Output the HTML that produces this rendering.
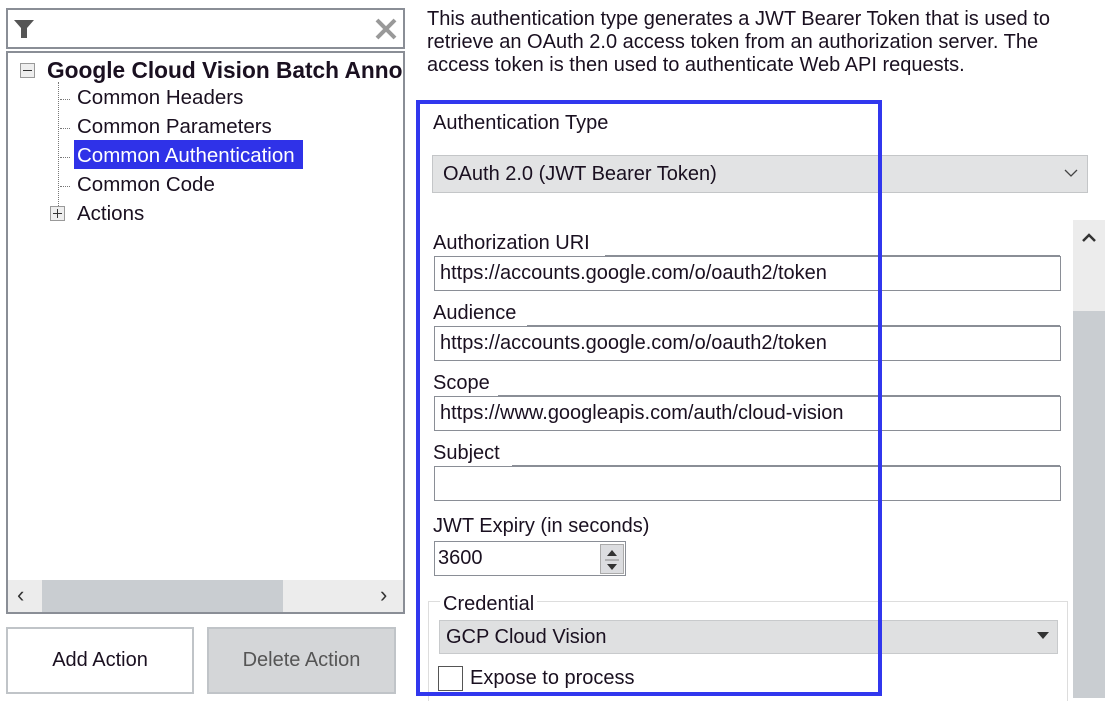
<!DOCTYPE html>
<html><head><style>
*{box-sizing:border-box;margin:0;padding:0}
body{width:1109px;height:698px;background:#fff;position:relative;overflow:hidden;font-family:"Liberation Sans",sans-serif;color:#1a1020;font-size:20.5px}
.a{position:absolute}
.box{position:absolute;border:1px solid #8a8e96;background:#fff}
.lbl{position:absolute;font-size:20px;white-space:nowrap}
.ln{position:absolute;height:1px;background:#8a8e96}
.tb{position:absolute;border:1px solid #8a8e96;background:#fff;font-size:20px;padding-left:5px;line-height:32px;white-space:nowrap}
.tree{position:absolute;font-size:20.5px;white-space:nowrap}
.dot{position:absolute;border-top:1px dotted #777;width:10px}
</style></head><body>
<div class="box" style="left:6px;top:8px;width:399px;height:41px;border-width:2px"></div>
<svg class="a" style="left:13px;top:18px" width="22" height="22" viewBox="0 0 22 22"><path d="M1 2h20l-7 8v10h-6v-10z" fill="#555"/></svg>
<svg class="a" style="left:374px;top:17px" width="24" height="24" viewBox="0 0 24 24"><path d="M3 3L21 21M21 3L3 21" stroke="#999" stroke-width="4"/></svg>
<div class="box" style="left:6px;top:51px;width:399px;height:563px;border-width:2px"></div>
<div class="a" style="left:20px;top:63px;width:15px;height:15px;border:1px solid #999;background:#eee"></div>
<div class="a" style="left:23px;top:70px;width:9px;height:1px;background:#333"></div>
<div class="a" style="left:58px;top:82px;height:130px;border-left:1px dotted #777"></div>
<div class="tree" style="left:47px;top:57px;font-weight:bold;font-size:22.7px">Google Cloud Vision Batch Anno</div>
<div class="dot" style="left:60px;top:99px"></div><div class="tree" style="left:77px;top:86px">Common Headers</div>
<div class="dot" style="left:60px;top:128px"></div><div class="tree" style="left:77px;top:115px">Common Parameters</div>
<div class="dot" style="left:60px;top:157px"></div><div class="a" style="left:74px;top:140px;width:229px;height:29px;background:#2f32e8"></div><div class="tree" style="left:77px;top:144px;color:#fff">Common Authentication</div>
<div class="dot" style="left:60px;top:186px"></div><div class="tree" style="left:77px;top:173px">Common Code</div>
<div class="a" style="left:50px;top:206px;width:15px;height:15px;border:1px solid #999;background:#eee"></div>
<div class="a" style="left:53px;top:213px;width:9px;height:1px;background:#333"></div><div class="a" style="left:57px;top:209px;width:1px;height:9px;background:#333"></div>
<div class="tree" style="left:77px;top:202px">Actions</div>
<div class="a" style="left:8px;top:580px;width:395px;height:32px;background:#ececec"></div>
<div class="a" style="left:42px;top:580px;width:241px;height:32px;background:#c9cdd1"></div>
<div class="a" style="left:17px;top:582px;font-size:22px;color:#333">&lsaquo;</div>
<div class="a" style="left:380px;top:582px;font-size:22px;color:#333">&rsaquo;</div>
<div class="a" style="left:6px;top:627px;width:188px;height:67px;border:2px solid #c0c4c8;background:#fff;text-align:center;line-height:63px;font-size:20px">Add Action</div>
<div class="a" style="left:207px;top:627px;width:189px;height:67px;border:2px solid #c0c4c8;background:#d4d6d8;text-align:center;line-height:63px;font-size:20px;color:#555">Delete Action</div>
<div class="a" style="left:427px;top:8px;font-size:20px;line-height:23px;width:680px;white-space:nowrap">This authentication type generates a JWT Bearer Token that is used to<br>retrieve an OAuth 2.0 access token from an authorization server. The<br>access token is then used to authenticate Web API requests.</div>
<div class="lbl" style="left:433px;top:112px">Authentication Type</div>
<div class="a" style="left:432px;top:155px;width:656px;height:38px;background:#e2e3e4;border:1px solid #c4c6c8;font-size:20px;line-height:36px;padding-left:10px">OAuth 2.0 (JWT Bearer Token)</div>
<svg class="a" style="left:1064px;top:168px" width="14" height="10"><path d="M1 2l6 6 6-6" stroke="#444" fill="none" stroke-width="1.3"/></svg>
<div class="a" style="left:1073px;top:220px;width:32px;height:478px;background:#ececec"></div>
<div class="a" style="left:1073px;top:311px;width:32px;height:387px;background:#c9cdd1"></div>
<svg class="a" style="left:1081px;top:231px" width="16" height="12"><path d="M2 10l6-6 6 6" stroke="#333" fill="none" stroke-width="2.5"/></svg>
<div class="lbl" style="left:433px;top:232px">Authorization URI</div><div class="ln" style="left:605px;top:255px;width:455px"></div>
<div class="tb" style="left:434px;top:256px;width:627px;height:35px">https://accounts.google.com/o/oauth2/token</div>
<div class="lbl" style="left:433px;top:302px">Audience</div><div class="ln" style="left:527px;top:325px;width:533px"></div>
<div class="tb" style="left:434px;top:326px;width:627px;height:35px">https://accounts.google.com/o/oauth2/token</div>
<div class="lbl" style="left:433px;top:372px">Scope</div><div class="ln" style="left:498px;top:395px;width:562px"></div>
<div class="tb" style="left:434px;top:396px;width:627px;height:35px">https://www.googleapis.com/auth/cloud-vision</div>
<div class="lbl" style="left:433px;top:442px">Subject</div><div class="ln" style="left:512px;top:465px;width:548px"></div>
<div class="tb" style="left:434px;top:466px;width:627px;height:35px"></div>
<div class="lbl" style="left:433px;top:515px">JWT Expiry (in seconds)</div>
<div class="tb" style="left:434px;top:541px;width:192px;height:35px;padding-left:3px">3600</div>
<div class="a" style="left:600px;top:544px;width:24px;height:30px;background:#dcdde0;border:1px solid #aaa"></div>
<svg class="a" style="left:604px;top:547px" width="16" height="26"><path d="M3 9l5-6 5 6z M3 17l5 6 5-6z" fill="#333"/><path d="M1 13h14" stroke="#888"/></svg>
<div class="a" style="left:428px;top:601px;width:640px;height:100px;border:1px solid #ddd;border-bottom:none"></div>
<div class="lbl" style="left:440px;top:593px;background:#fff;padding:0 3px">Credential</div>
<div class="a" style="left:439px;top:620px;width:619px;height:34px;background:#dfe0e1;border:1px solid #c8cacc;font-size:20px;line-height:32px;padding-left:6px">GCP Cloud Vision</div>
<svg class="a" style="left:1037px;top:632px" width="12" height="8"><path d="M0 0h12l-6 7z" fill="#333"/></svg>
<div class="a" style="left:438px;top:666px;width:25px;height:25px;border:1px solid #555;background:#fff"></div>
<div class="lbl" style="left:470px;top:667px">Expose to process</div>
<div class="a" style="left:416px;top:100px;width:466px;height:596px;border:4px solid #3137ee"></div>
</body></html>
